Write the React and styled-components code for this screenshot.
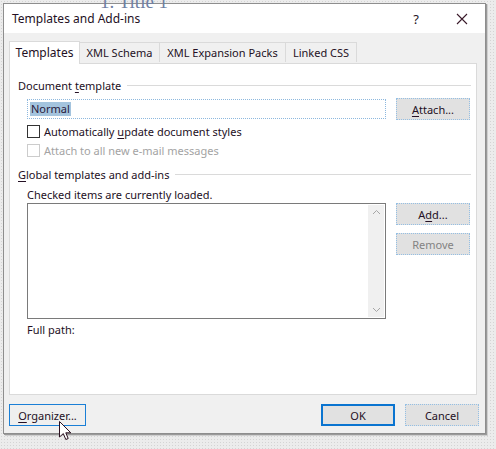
import React from "react";
import styled, { createGlobalStyle } from "styled-components";

const TEXT = "#241024";
const LINE = "#dadada";

const GlobalStyle = createGlobalStyle`
  html, body {
    margin: 0;
    padding: 0;
  }
  body {
    width: 496px;
    height: 449px;
    overflow: hidden;
    background-color: #ececec;
    background-image: radial-gradient(#d4d4d4 0.6px, transparent 0.8px);
    background-size: 3px 3px;
    font-family: "Segoe UI", "Noto Sans", sans-serif;
    font-size: 11px;
    color: ${TEXT};
  }
  u {
    text-decoration-thickness: 1px;
    text-underline-offset: 2px;
  }
`;

const Stage = styled.div`
  position: relative;
  width: 496px;
  height: 449px;
  box-sizing: border-box;
  padding: 3px 0 0 3px;
`;

// the heading of the Word document peeking out behind the dialog
const DocHeading = styled.div`
  position: absolute;
  top: -8px;
  left: 100px;
  font-family: "Liberation Serif", serif;
  font-size: 19px;
  line-height: 19px;
  color: #6f7fa3;
  z-index: 2;
  pointer-events: none;
`;

const Dialog = styled.div`
  width: 483px;
  height: 431px;
  box-sizing: border-box;
  border: 1px solid #8e8e8e;
  background: #f0f0f0;
  display: flex;
  flex-direction: column;
  box-shadow: 1px 1px 0 #9a9a9a, 2px 2px 0 #cfcfcf;
`;

const TitleBar = styled.div`
  height: 29px;
  flex: none;
  background: #ffffff;
  display: flex;
  align-items: center;
  padding-left: 8px;
`;

const Title = styled.div`
  flex: 1;
  font-size: 12px;
`;

const TitleButton = styled.div`
  width: 46px;
  height: 29px;
  display: flex;
  align-items: center;
  justify-content: center;
  font-size: 13px;
  padding-left: ${(p) => p.$nudge || 0}px;
`;

const Body = styled.div`
  flex: 1;
  display: flex;
  flex-direction: column;
  padding: 8px 8px 7px 5px;
`;

const TabRow = styled.div`
  display: flex;
  align-items: flex-end;
  height: 23px;
  margin-bottom: -1px;
  position: relative;
  z-index: 1;
`;

const Tab = styled.div`
  box-sizing: border-box;
  width: ${(p) => p.$width}px;
  height: ${(p) => (p.$active ? 23 : 20)}px;
  margin-bottom: ${(p) => (p.$active ? 0 : 2)}px;
  background: ${(p) => (p.$active ? "#ffffff" : "#f0f0f0")};
  border: 1px solid ${LINE};
  border-bottom: none;
  border-left-width: ${(p) => (p.$first ? 1 : 0)}px;
  display: flex;
  align-items: center;
  justify-content: center;
  font-size: ${(p) => (p.$active ? 12 : 11)}px;
  padding-bottom: ${(p) => (p.$active ? 2 : 0)}px;
`;

const Panel = styled.div`
  box-sizing: border-box;
  height: 332px;
  flex: none;
  background: #ffffff;
  border: 1px solid ${LINE};
  padding: 13px 6px 0 8px;
  display: flex;
  flex-direction: column;
`;

const GroupHeading = styled.div`
  height: 16px;
  display: flex;
  align-items: center;
  gap: 6px;
  margin-top: ${(p) => p.$gap || 0}px;

  &::after {
    content: "";
    flex: 1;
    height: 1px;
    background: ${LINE};
    margin-right: -1px;
  }
`;

const FieldRow = styled.div`
  display: flex;
  align-items: flex-start;
  gap: 10px;
  margin-top: ${(p) => p.$gap || 0}px;
  padding-left: 9px;
`;

const TextField = styled.div`
  box-sizing: border-box;
  width: 359px;
  height: 20px;
  margin-top: 1px;
  border: 1px dotted #8db8de;
  display: flex;
  align-items: center;
  padding-left: 2px;
`;

const Selected = styled.span`
  background: #a4c4de;
  color: #2a1a3a;
  line-height: 14px;
  padding: 0 1px;
`;

const Button = styled.div`
  box-sizing: border-box;
  width: ${(p) => p.$width || 74}px;
  height: 22px;
  flex: none;
  display: flex;
  align-items: center;
  justify-content: center;
  background: ${(p) => (p.$flat ? "#efefef" : "#e1e1e1")};
  border: ${(p) =>
    p.$default
      ? "2px solid #0a74d0"
      : p.$flat
      ? "1px solid #1a7fd6"
      : "1px dotted #94bfe4"};
  color: ${(p) => (p.$disabled ? "#838383" : TEXT)};
`;

const ButtonColumn = styled.div`
  display: flex;
  flex-direction: column;
  gap: 8px;
`;

const CheckRow = styled.label`
  height: 19px;
  display: flex;
  align-items: center;
  gap: 4px;
  padding-left: 9px;
  margin-top: ${(p) => p.$gap || 0}px;
  color: ${(p) => (p.$disabled ? "#a3a3a3" : TEXT)};
`;

const Box = styled.span`
  box-sizing: border-box;
  width: 13px;
  height: 13px;
  border: 1px solid ${(p) => (p.$disabled ? "#cccccc" : "#333333")};
  background: #ffffff;
`;

const Note = styled.div`
  height: 16px;
  display: flex;
  align-items: center;
  padding-left: 9px;
  margin-top: ${(p) => p.$gap || 0}px;
`;

const ListBox = styled.div`
  box-sizing: border-box;
  width: 359px;
  height: 116px;
  border: 1px solid #7a7a7a;
  display: flex;
  justify-content: flex-end;
  padding: 1px;
`;

const ScrollBar = styled.div`
  width: 16px;
  background: #f0f0f0;
  display: flex;
  flex-direction: column;
  justify-content: space-between;
  align-items: center;
  padding: 4px 0;
`;

const Footer = styled.div`
  display: flex;
  align-items: center;
  margin-top: 9px;
  margin-right: -2px;
  gap: 10px;
`;

const Spacer = styled.div`
  flex: 1;
`;

const Cursor = styled.svg`
  position: absolute;
  left: 59px;
  top: 421px;
`;

const Chevron = ({ up }) => (
  <svg width="9" height="6" viewBox="0 0 9 6">
    <path
      d={up ? "M1 5 L4.5 1.5 L8 5" : "M1 1 L4.5 4.5 L8 1"}
      fill="none"
      stroke="#a6a6a6"
      strokeWidth="1"
    />
  </svg>
);

const tabs = [
  { label: "Templates", width: 71 },
  { label: "XML Schema", width: 80 },
  { label: "XML Expansion Packs", width: 126 },
  { label: "Linked CSS", width: 71 },
];

const App = () => {
  return (
    <Stage>
      <GlobalStyle />
      <DocHeading>1. Title 1</DocHeading>
      <Dialog>
        <TitleBar>
          <Title>Templates and Add-ins</Title>
          <TitleButton $nudge={4}>?</TitleButton>
          <TitleButton>
            <svg width="12" height="12" viewBox="0 0 12 12">
              <path
                d="M1 1 L11 11 M11 1 L1 11"
                stroke="#3a1a2a"
                strokeWidth="1.1"
              />
            </svg>
          </TitleButton>
        </TitleBar>
        <Body>
          <TabRow>
            {tabs.map((tab, index) => (
              <Tab
                key={tab.label}
                $width={tab.width}
                $active={index === 0}
                $first={index === 0}
              >
                {tab.label}
              </Tab>
            ))}
          </TabRow>
          <Panel>
            <GroupHeading>
              <span>
                Document <u>t</u>emplate
              </span>
            </GroupHeading>
            <FieldRow $gap={5}>
              <TextField>
                <Selected>Normal</Selected>
              </TextField>
              <Button>
                <span>
                  <u>A</u>ttach...
                </span>
              </Button>
            </FieldRow>
            <CheckRow $gap={2}>
              <Box />
              <span>
                Automatically <u>u</u>pdate document styles
              </span>
            </CheckRow>
            <CheckRow $disabled>
              <Box $disabled />
              <span>Attach to all new e-mail messages</span>
            </CheckRow>
            <GroupHeading $gap={6}>
              <span>
                <u>G</u>lobal templates and add-ins
              </span>
            </GroupHeading>
            <Note $gap={4}>Checked items are currently loaded.</Note>
            <FieldRow $gap={1}>
              <ListBox>
                <ScrollBar>
                  <Chevron up />
                  <Chevron />
                </ScrollBar>
              </ListBox>
              <ButtonColumn>
                <Button>
                  <span>
                    A<u>d</u>d...
                  </span>
                </Button>
                <Button $disabled>Remove</Button>
              </ButtonColumn>
            </FieldRow>
            <Note $gap={2}>Full path:</Note>
          </Panel>
          <Footer>
            <Button $flat $width={77}>
              <span>
                <u>O</u>rganizer...
              </span>
            </Button>
            <Spacer />
            <Button $default>OK</Button>
            <Button>Cancel</Button>
          </Footer>
        </Body>
      </Dialog>
      <Cursor width="13" height="20" viewBox="0 0 13 20">
        <path
          d="M0.5 0.5 L0.5 16 L4.3 12.6 L6.8 18.5 L9.2 17.5 L6.8 11.8 L11.8 11.8 Z"
          fill="#ffffff"
          stroke="#2a1020"
          strokeWidth="1"
          strokeLinejoin="round"
        />
      </Cursor>
    </Stage>
  );
};

export default App;
